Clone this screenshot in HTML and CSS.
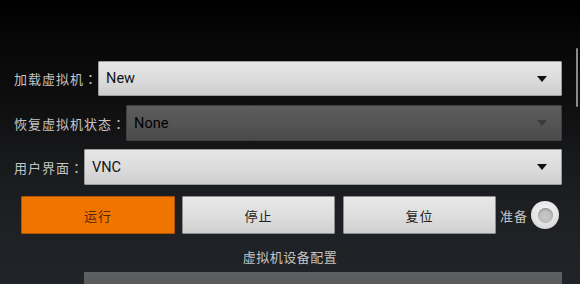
FILE: index.html
```html
<!DOCTYPE html>
<html lang="zh-CN">
<head>
<meta charset="utf-8">
<link rel="stylesheet" href="styles.css">
</head>
<body>
<div class="screen">
  <div class="scrollbar"></div>
  <div class="row row-load">
    <span class="label">加载虚拟机<span class="colon" lang="zh-TW">：</span></span>
    <div class="spinner"><span class="value">New</span><span class="arrow"></span></div>
  </div>
  <div class="row row-restore">
    <span class="label">恢复虚拟机状态<span class="colon" lang="zh-TW">：</span></span>
    <div class="spinner spinner-disabled"><span class="value-disabled">None</span><span class="arrow arrow-disabled"></span></div>
  </div>
  <div class="row row-ui">
    <span class="label">用户界面<span class="colon" lang="zh-TW">：</span></span>
    <div class="spinner"><span class="value">VNC</span><span class="arrow"></span></div>
  </div>
  <div class="actions">
    <button class="btn btn-run">运行</button>
    <button class="btn btn-stop">停止</button>
    <button class="btn btn-reset">复位</button>
    <span class="ready">准备</span>
    <span class="radio"><span class="radio-dot"></span></span>
  </div>
  <div class="section-title">虚拟机设备配置</div>
  <div class="section-box"></div>
</div>
</body>
</html>
```

FILE: styles.css
```css
html, body {
  margin: 0;
  padding: 0;
  background: #ffffff;
}
body {
  width: 580px;
  height: 296px;
  overflow: hidden;
  font-family: "Noto Sans CJK SC", "Noto Sans", sans-serif;
}
.screen {
  position: relative;
  height: 284px;
  box-sizing: border-box;
  padding-top: 61px;
  background: linear-gradient(180deg, #000000 0px, #070707 40px, #0e0e0f 100px, #18191b 160px, #1e2024 220px, #202327 284px);
  overflow: hidden;
}
.scrollbar {
  position: absolute;
  left: 576px;
  top: 48px;
  width: 2px;
  height: 59px;
  background: #8a8a8a;
  border-radius: 1px;
}
.row {
  display: flex;
  align-items: center;
  padding-left: 14px;
  padding-right: 18px;
  height: 35px;
}
.row-restore {
  margin-top: 9px;
  height: 36px;
}
.row-ui {
  margin-top: 8px;
  height: 36px;
}
.label {
  color: #c4c4c4;
  font-size: 13px;
  letter-spacing: 1px;
  white-space: nowrap;
}
.colon {
  font-family: "Noto Sans CJK TC", "Noto Sans CJK SC", sans-serif;
}
.spinner {
  flex: 1;
  height: 100%;
  box-sizing: border-box;
  display: flex;
  align-items: center;
  justify-content: space-between;
  padding: 0 14px 0 7px;
  background: linear-gradient(180deg, #e6e6e6 0%, #dadada 60%, #cdcdcd 100%);
  border: 1px solid #9c9c9c;
  border-radius: 1px;
}
.value {
  font-family: Roboto, "Liberation Sans", sans-serif;
  font-size: 14.5px;
  color: #141414;
}
.arrow {
  width: 0;
  height: 0;
  border-left: 5px solid transparent;
  border-right: 5px solid transparent;
  border-top: 6px solid #111111;
}
.spinner-disabled {
  background: linear-gradient(180deg, #5c5c5c 0%, #555555 50%, #4a4a4a 100%);
  border-color: #3f3f3f;
  color: #000000;
}
.value-disabled {
  font-family: Roboto, "Liberation Sans", sans-serif;
  font-size: 14.5px;
  color: #000000;
}
.arrow-disabled { border-top-color: #3c3c3c; }
.actions {
  display: flex;
  align-items: center;
  margin-top: 11px;
  padding-left: 21px;
  height: 38px;
}
.btn {
  height: 38px;
  box-sizing: border-box;
  border: 1px solid #8e8e8e;
  border-radius: 1px;
  background: linear-gradient(180deg, #e8e8e8 0%, #dcdcdc 60%, #cfcfcf 100%);
  color: #222222;
  font-family: "Noto Sans CJK SC", sans-serif;
  font-size: 13px;
  letter-spacing: 1px;
  padding: 0;
}
.btn-run {
  width: 154px;
  margin-right: 7px;
  background: #f07400;
  border-color: #b05400;
  color: #5a2800;
}
.btn-stop {
  width: 153px;
  margin-right: 8px;
}
.btn-reset {
  width: 153px;
  margin-right: 4px;
}
.ready {
  color: #c4c4c4;
  font-size: 13px;
  letter-spacing: 1px;
  margin-right: 3px;
}
.radio {
  width: 28px;
  height: 28px;
  border-radius: 50%;
  background: radial-gradient(circle at 50% 35%, #f4f4f4 0%, #e2e2e2 60%, #c6c6c6 100%);
  display: flex;
  align-items: center;
  justify-content: center;
}
.radio-dot {
  width: 15px;
  height: 15px;
  border-radius: 50%;
  background: radial-gradient(circle at 50% 60%, #c8c8c8 0%, #b4b4b4 100%);
  box-shadow: inset 0 1px 2px rgba(0,0,0,0.25);
}
.section-title {
  text-align: center;
  color: #c4c4c4;
  font-size: 13px;
  letter-spacing: 0.5px;
  margin-top: 13px;
  height: 20px;
  line-height: 20px;
}
.section-box {
  margin: 5px 18px 0 84px;
  height: 14px;
  background: linear-gradient(180deg, #5e6062 0%, #56585a 100%);
}
```
